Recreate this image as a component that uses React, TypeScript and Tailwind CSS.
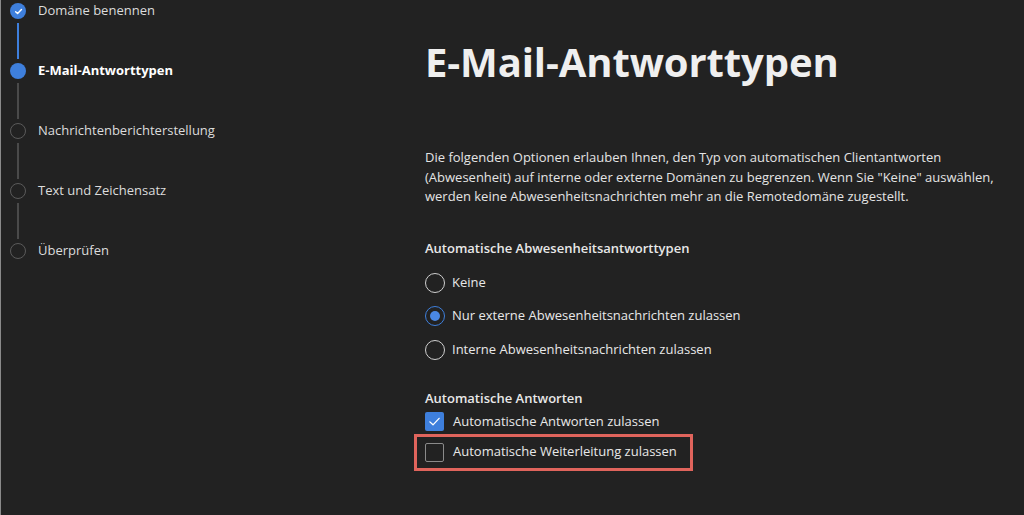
import React from "react";

const font = { fontFamily: '"Open Sans", "Noto Sans", Arial, sans-serif' };

function StepCircle({ state }: { state: "done" | "current" | "todo" }) {
  if (state === "done")
    return (
      <div className="w-4 h-4 rounded-full bg-[#3e7fdc] flex items-center justify-center">
        <svg width="9" height="9" viewBox="0 0 10 10" fill="none">
          <path d="M1.8 5.2 L4 7.3 L8.3 2.8" stroke="white" strokeWidth="1.6" strokeLinecap="round" strokeLinejoin="round" />
        </svg>
      </div>
    );
  if (state === "current") return <div className="w-4 h-4 rounded-full bg-[#3e7fdc]" />;
  return <div className="w-4 h-4 rounded-full border-[1.5px] border-[#5a5a5a]" />;
}

const steps: { label: string; state: "done" | "current" | "todo" }[] = [
  { label: "Domäne benennen", state: "done" },
  { label: "E-Mail-Antworttypen", state: "current" },
  { label: "Nachrichtenberichterstellung", state: "todo" },
  { label: "Text und Zeichensatz", state: "todo" },
  { label: "Überprüfen", state: "todo" },
];

function Radio({ checked, label }: { checked?: boolean; label: string }) {
  return (
    <div className="flex items-center h-[20px]">
      {checked ? (
        <div className="w-5 h-5 rounded-full border-[1.5px] border-[#3e7fdc] flex items-center justify-center">
          <div className="w-[10px] h-[10px] rounded-full bg-[#4a88e4]" />
        </div>
      ) : (
        <div className="w-5 h-5 rounded-full border-[1.5px] border-[#cfcfcf]" />
      )}
      <span className="ml-[7px] text-[13px] text-[#e8e8e8]">{label}</span>
    </div>
  );
}

function Checkbox({ checked, label }: { checked?: boolean; label: string }) {
  return (
    <div className="flex items-center h-[20px]">
      {checked ? (
        <div className="w-[19px] h-[19px] rounded-[2px] bg-[#3e7fdc] flex items-center justify-center">
          <svg width="13" height="13" viewBox="0 0 14 14" fill="none">
            <path d="M2 7.4 L5.4 10.6 L12 3.6" stroke="white" strokeWidth="1.4" strokeLinecap="round" strokeLinejoin="round" />
          </svg>
        </div>
      ) : (
        <div className="w-[19px] h-[19px] rounded-[2px] border border-[#8a8a8a]" />
      )}
      <span className="ml-[9px] text-[13px] text-[#e8e8e8]">{label}</span>
    </div>
  );
}

export default function App() {
  return (
    <div className="w-[1024px] h-[515px] bg-[#222222] flex overflow-hidden border-l border-[#8a8a8a]" style={font}>
      <div className="w-[424px] shrink-0 pl-[9px] pt-[3px]">
        {steps.map((s, i) => (
          <div key={s.label} className="flex">
            <div className="flex flex-col items-center w-4">
              <StepCircle state={s.state} />
              {i < steps.length - 1 && (
                <div className={`w-[2px] h-[36px] my-[4px] ${i === 0 ? "bg-[#3e7fdc]" : "bg-[#4a4a4a]"}`} />
              )}
            </div>
            <div
              className={`ml-[12px] text-[13px] leading-4 -mt-[1px] ${
                s.state === "current" ? "font-bold text-white" : "text-[#dcdcdc]"
              }`}
            >
              {s.label}
            </div>
          </div>
        ))}
      </div>
      <div className="flex-1 pt-[34px]">
        <h1 className="text-[40px] font-bold text-[#efefef] leading-[56px] tracking-[-0.1px]">E-Mail-Antworttypen</h1>
        <p className="mt-[58px] text-[13px] leading-[19.5px] text-[#e4e4e4]">
          Die folgenden Optionen erlauben Ihnen, den Typ von automatischen Clientantworten
          <br />
          (Abwesenheit) auf interne oder externe Domänen zu begrenzen. Wenn Sie "Keine" auswählen,
          <br />
          werden keine Abwesenheitsnachrichten mehr an die Remotedomäne zugestellt.
        </p>
        <div className="mt-[31px] text-[13px] font-semibold text-[#e8e8e8] leading-5">
          Automatische Abwesenheitsantworttypen
        </div>
        <div className="mt-[15px] flex flex-col gap-[13.5px]">
          <Radio label="Keine" />
          <Radio checked label="Nur externe Abwesenheitsnachrichten zulassen" />
          <Radio label="Interne Abwesenheitsnachrichten zulassen" />
        </div>
        <div className="mt-[28px] text-[13px] font-semibold text-[#e8e8e8] leading-5">Automatische Antworten</div>
        <div className="mt-[4px]">
          <Checkbox checked label="Automatische Antworten zulassen" />
        </div>
        <div className="mt-[2px] -ml-[11px] w-[279px] h-[37px] border-[3px] border-[#e0645c] pl-[8px] flex items-center">
          <Checkbox label="Automatische Weiterleitung zulassen" />
        </div>
      </div>
    </div>
  );
}
